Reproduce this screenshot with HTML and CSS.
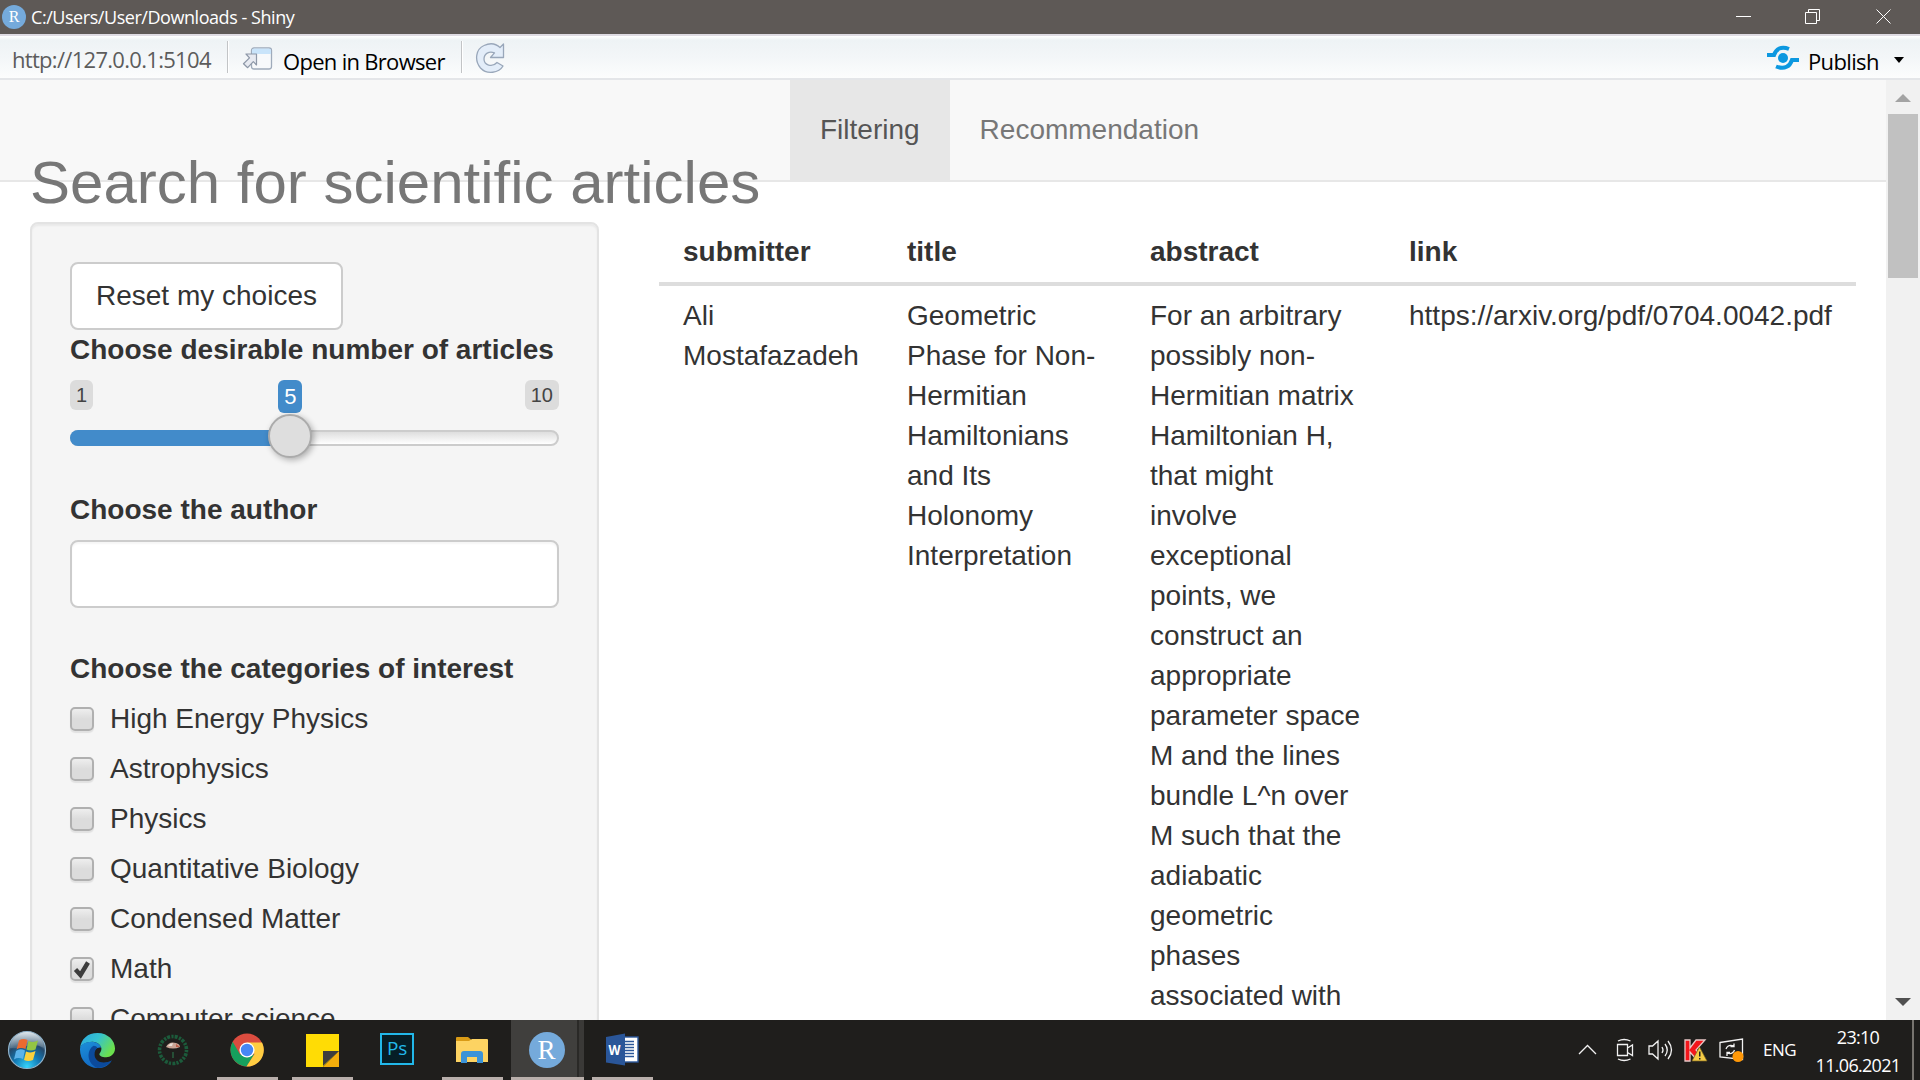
FILE: index.html
```html
<!DOCTYPE html>
<html lang="en">
<head>
<meta charset="utf-8">
<title>C:/Users/User/Downloads - Shiny</title>
<link rel="stylesheet" href="styles.css">
</head>
<body>
<header class="titlebar">
  <span class="r-badge">R</span>
  <span class="caption">C:/Users/User/Downloads - Shiny</span>
  <svg class="window-controls" width="180" height="34" viewBox="0 0 180 34" fill="none" stroke="#fff" stroke-width="1">
    <path d="M16 16.500h15M85.500 12.500h11v11h-11zM88.500 12.500v-3h11v11h-3M156.500 9.500l14 14M170.500 9.500l-14 14"/>
  </svg>
</header>
<div class="toolbar">
  <span class="url">http://127.0.0.1:5104</span>
  <i class="divider"></i>
  <svg class="open-icon" width="32" height="26" viewBox="0 0 32 26">
    <rect x="9.500" y="2" width="20" height="21" rx="2.500" fill="#f7f9fb" stroke="#9fabbb" stroke-width="1.300"/>
    <path d="M10 8V4.500q0-2 2-2h15q2 0 2 2V8z" fill="#c9e4fa"/>
    <path d="M4 8h10.500v11l-3.200-3.300-5.600 6-4.200-4 6-5.800z" fill="#e7eaf1" stroke="#8d97a7" stroke-width="1.200" stroke-linejoin="round"/>
  </svg>
  <span class="open-label">Open in Browser</span>
  <i class="divider"></i>
  <svg class="reload-icon" width="32" height="32" viewBox="0 0 32 32">
    <path d="M28.500 2v13.500H15.500l4-4.600C14 8.500 9 12 9 17c0 6 8 9 13 3.500l6 3.500C24 31 12 33 5.500 26-1 18 1 7 9 3.500c6-2.800 12-1.800 16 2z" fill="#e3edf9" stroke="#99a7ba" stroke-width="1.300" stroke-linejoin="round"/>
  </svg>
  <div class="publish">
    <svg width="32" height="26" viewBox="0 0 32 26">
      <circle cx="16" cy="13" r="5" fill="#0c98e0"/>
      <path d="M0 10h7C9 4 14 .8 22 4M32 15h-7C23 21 18 25 9 21.500" fill="none" stroke="#0c98e0" stroke-width="4"/>
    </svg>
    <span class="publish-label">Publish</span>
    <svg class="caret" width="10" height="6" viewBox="0 0 10 6"><path d="M0 0h10L5 6z"/></svg>
  </div>
</div>
<div class="viewport">
  <div class="page">
    <nav class="navbar">
      <a class="tab active">Filtering</a>
      <a class="tab">Recommendation</a>
    </nav>
    <h2 class="page-title">Search for scientific articles</h2>
    <div class="columns">
      <form class="well">
        <button type="button" class="btn">Reset my choices</button>
        <label class="heading">Choose desirable number of articles</label>
        <div class="slider">
          <div class="slider-labels">
            <span class="limit">1</span><span class="current">5</span><span class="limit last">10</span>
          </div>
          <div class="track"><div class="fill"></div><div class="handle"></div></div>
        </div>
        <label class="heading">Choose the author</label>
        <div class="input"></div>
        <label class="heading">Choose the categories of interest</label>
        <ul class="checks">
          <li><i class="box"></i>High Energy Physics</li>
          <li><i class="box"></i>Astrophysics</li>
          <li><i class="box"></i>Physics</li>
          <li><i class="box"></i>Quantitative Biology</li>
          <li><i class="box"></i>Condensed Matter</li>
          <li><i class="box"><svg width="20" height="20" viewBox="0 0 20 20"><path d="M3.500 10.500l5 5.500L16 3.500" fill="none" stroke="#3c3c3c" stroke-width="4.400"/></svg></i>Math</li>
          <li><i class="box"></i>Computer science</li>
        </ul>
      </form>
      <table class="results">
        <colgroup><col class="c1"><col class="c2"><col class="c3"><col class="c4"></colgroup>
        <thead><tr><th>submitter</th><th>title</th><th>abstract</th><th>link</th></tr></thead>
        <tbody><tr>
          <td>Ali Mostafazadeh</td>
          <td>Geometric Phase for Non-Hermitian Hamiltonians and Its Holonomy Interpretation</td>
          <td>For an arbitrary possibly non-Hermitian matrix Hamiltonian H, that might involve exceptional points, we construct an appropriate parameter space M and the lines bundle L^n over M such that the adiabatic geometric phases associated with</td>
          <td>https://arxiv.org/pdf/0704.0042.pdf</td>
        </tr></tbody>
      </table>
    </div>
  </div>
  <div class="scrollbar">
    <svg width="16" height="8" viewBox="0 0 16 8"><path d="M8 0l8 8H0z" fill="#a3a3a3"/></svg>
    <div class="thumb"></div>
    <svg class="down" width="16" height="8" viewBox="0 0 16 8"><path d="M0 0h16L8 8z" fill="#505050"/></svg>
  </div>
</div>
<footer class="taskbar">
  <div class="task start">
    <svg width="40" height="40" viewBox="0 0 40 40">
      <defs>
        <radialGradient id="orb" cx=".5" cy=".95" r=".9"><stop offset="0" stop-color="#35d4fa"/><stop offset=".4" stop-color="#1278b4"/><stop offset=".7" stop-color="#24496b"/><stop offset="1" stop-color="#9fb4c4"/></radialGradient>
        <linearGradient id="gloss" x2="0" y2="1"><stop offset="0" stop-color="#dde6ec"/><stop offset="1" stop-color="#6f8798" stop-opacity=".5"/></linearGradient>
      </defs>
      <circle cx="20" cy="20" r="18.500" fill="url(#orb)" stroke="#8fb3cb" stroke-width="1.200"/>
      <path d="M3 18a17 16 0 0 1 34 0q-8-5-17-2T3 18z" fill="url(#gloss)"/>
      <path d="M12 10.500q4-2.500 8.500-.5l-2 9q-5-2-9 .5z" fill="#ea6a30"/>
      <path d="M21.500 11q5 2 9.500-.5l-2.500 9q-5 2-9 0z" fill="#93c644"/>
      <path d="M9 21q4-3 9-.5l-2 8.500q-5-2-9 .5z" fill="#5cb3ea"/>
      <path d="M19 21.500q5 2 9.500-.5l-2.500 9q-5 2-9 0z" fill="#fbd03c"/>
    </svg>
  </div>
  <div class="task edge">
    <svg width="37" height="37" viewBox="0 0 38 38">
      <defs>
        <linearGradient id="e1" x1="0" y1="0" x2="1" y2=".5"><stop offset="0" stop-color="#2aa6e0"/><stop offset=".5" stop-color="#35c2cf"/><stop offset="1" stop-color="#6be04d"/></linearGradient>
        <linearGradient id="e2" x1="0" y1="0" x2=".5" y2="1"><stop offset="0" stop-color="#1c8fd8"/><stop offset="1" stop-color="#1267c2"/></linearGradient>
      </defs>
      <path d="M1 17C2 7 9 1 19 1c11 0 18 8 18 16 0 6-5 9-9 9-5 0-7-2-7-3 0-2 2-2 2-6 0-3-4-7-9-7C7 10 2 13 1 17z" fill="url(#e1)"/>
      <path d="M1 18c0-5 5-8 12-8 5 0 9 3 10 6-4-1-8 2-8 7 0 7 7 12 18 7C30 35 25 37 19 37 9 37 1 29 1 18z" fill="url(#e2)"/>
      <path d="M15 14c-6 3-9 17 4 23 7 0 12-4 15-8-10 5-18 1-18-6 0-3 1-5 3-7-1-1-2-2-4-2z" fill="#0b4a9c"/>
    </svg>
  </div>
  <div class="task ring">
    <svg width="34" height="34" viewBox="0 0 34 34">
      <circle cx="17" cy="17" r="13.500" fill="none" stroke="#1c5b3b" stroke-width="3.600" stroke-dasharray="2.200 1.100 3 1.400"/>
      <path d="M10 14q3-6 10-4 4 1 4 4-7 3-14 0z" fill="#c9a596"/><path d="M12 13q2-3 5-3l-1 3z" fill="#e9e0d8"/><path d="M20 11l4 3h-4z" fill="#bd5e48"/>
      <path d="M17 19v6" stroke="#2c7049" stroke-width="1.200"/>
    </svg>
  </div>
  <div class="task chrome open">
    <svg width="34" height="34" viewBox="0 0 34 34">
      <circle cx="17" cy="17" r="16.500" fill="#db4c3f"/>
      <path d="M2.700 8.700A16.500 16.500 0 0 0 16.500 33.500L24.500 21 17 24.500 9.800 21z" fill="#16a05d"/>
      <path d="M16.500 33.500A16.500 16.500 0 0 0 32 9.500H17l7.500 11.500z" fill="#ffcd42"/>
      <circle cx="17" cy="17" r="7.600" fill="#fff"/><circle cx="17" cy="17" r="6.200" fill="#4687f4"/>
    </svg>
  </div>
  <div class="task notes open">
    <svg width="33" height="33" viewBox="0 0 33 33">
      <path d="M0 0h33v17L17 33H0z" fill="#ffdc05"/><path d="M33 17v16H17z" fill="#f5ae0b"/><path d="M17 17h16L17 32z" fill="#3e3e3e"/>
    </svg>
  </div>
  <div class="task ps"><span class="ps-tile">Ps</span></div>
  <div class="task folder open">
    <svg width="34" height="28" viewBox="0 0 34 28">
      <path d="M1 2q0-1 1-1h11l3 2.500V6H1z" fill="#d99b16"/>
      <path d="M1 5h13l3-2h15q1 0 1 1v22H1z" fill="#fdd362"/>
      <path d="M6 27V18q0-3 3-3h16q3 0 3 3v9h-6v-6H12v6z" fill="#3b93d8"/>
    </svg>
  </div>
  <div class="task rstudio open"><span class="r-badge large">R</span></div>
  <div class="task word open">
    <svg width="34" height="34" viewBox="0 0 34 34">
      <rect x="16" y="4" width="17" height="25" fill="#fff" stroke="#2b579a" stroke-width="1.400"/>
      <path d="M19 8.500h10M19 11.500h10M19 14.500h10M19 17.500h10M19 20.500h10M19 23.500h10" stroke="#2b579a" stroke-width="1.500"/>
      <path d="M1 4L20 .500v32L1 29.500z" fill="#2a5699"/>
      <text x="3.500" y="22" font-family="Open Sans, sans-serif" font-size="14" font-weight="700" fill="#fff" textLength="12" lengthAdjust="spacingAndGlyphs">W</text>
    </svg>
  </div>
  <div class="tray">
    <svg width="175" height="60" viewBox="0 0 175 60" fill="none" stroke="#f2f2f2" stroke-width="1.300">
      <path d="M1 34l8.500-8.500L18 34"/>
      <path d="M39.500 24.500h10v11h-10zM49.500 28l5-3v10.500l-5-3M40 21q6-3 12.500 0M40 39q6 3 12.500 0"/>
      <path d="M71 26h3.500l5.500-5v18l-5.500-5H71zM84 27q2 3 0 6M87 24q4.500 6 0 12M90 21q7 9 0 18"/>
      <path d="M107 20h5v8l6-8h9l-9 10 9 10h-8l-7-8v9h-5z" fill="#f3161c" stroke="#e9c8c6"/>
      <path d="M121.500 27l7.500 14h-15z" fill="#f4cb45" stroke="#7d6521" stroke-width=".7"/>
      <path d="M121 31.500h1.500v5H121zM121 38h1.500v1.500H121z" fill="#222" stroke="none"/>
      <path d="M142 22.500l22.500-3.500v20.500L142 37z"/><path d="M148 29q2-5 8-3m0-2.500v3h-3.500M156.500 30q-2 5-7.500 3m0 3v-3.500h3"/>
      <circle cx="160" cy="36.500" r="5.500" fill="#ff9808" stroke="none"/>
    </svg>
    <span class="lang">ENG</span>
    <div class="clock"><span class="time">23:10</span><span class="date">11.06.2021</span></div>
    <i class="peek"></i>
  </div>
</footer>
</body>
</html>
```
FILE: styles.css
```css
* { box-sizing: border-box; }
body {
  margin: 0; width: 1920px; height: 1080px; overflow: hidden;
  display: flex; flex-direction: column;
  font: 28px/40px "Liberation Sans", Arial, sans-serif; color: #333; background: #fff;
}
svg { display: block; flex: none; }

.titlebar {
  height: 36px; flex: none; display: flex; align-items: center;
  background: #5e5956; border-bottom: 2px solid #dedbe2; color: #fff;
  font: 18px/34px "Open Sans", sans-serif;
}
.r-badge {
  width: 24px; height: 24px; margin-left: 2px; border-radius: 50%; flex: none;
  background: #75aadb; color: #fff; text-align: center; font: 16px/24px "Liberation Serif", serif;
}
.r-badge.large { width: 36px; height: 36px; margin: 0 2px 0 0; font-size: 27px; line-height: 36px; }
.caption { margin-left: 5px; letter-spacing: -0.45px; }
.window-controls { margin: 0 20px 0 auto; }

.toolbar {
  height: 44px; flex: none; display: flex; align-items: center; padding: 2px 16px 0 12px;
  background: linear-gradient(#fff 0, #eef3f5 4px, #f3f6f8 50%, #fcfdfd 100%);
  border-bottom: 2px solid #e4e6e9; color: #000;
  font: 22px/36px "Open Sans", sans-serif;
}
.url { color: #5c5c5c; width: 215px; margin-top: 2px; letter-spacing: -0.7px; white-space: nowrap; }
.divider { width: 2px; height: 32px; margin-bottom: 2px; background: linear-gradient(90deg, #c2c4c6 50%, #fff 50%); }
.open-icon { margin: 2px 0 0 13px; }
.open-label { margin: 5px 0 0 9px; width: 178px; letter-spacing: -0.7px; white-space: nowrap; }
.reload-icon { margin-left: 12px; }
.publish { margin-left: auto; display: flex; align-items: center; }
.publish-label { margin: 5px 0 0 9px; width: 86px; letter-spacing: -0.65px; }
.caret { margin-top: 3px; }

.viewport { height: 940px; flex: none; display: flex; overflow: hidden; }
.page { width: 1886px; }
.navbar {
  height: 102px; display: flex; padding-left: 790px;
  background: #f8f8f8; border-bottom: 2px solid #e7e7e7; color: #777;
}
.tab { padding: 30px; height: 100px; line-height: 40px; }
.tab.active { background: #e7e7e7; color: #555; }
.page-title {
  position: relative; margin: -32px 0 6px 30px; font-size: 60px; line-height: 66px; font-weight: 400; color: #777;
}
.columns { display: flex; align-items: flex-start; padding: 0 30px; }
.well {
  width: 569px; height: 900px; padding: 38px; margin-right: 60px; flex: none;
  background: #f5f5f5; border: 2px solid #e3e3e3; border-radius: 8px;
  box-shadow: inset 0 2px 2px rgba(0, 0, 0, .05);
}
.btn {
  display: block; height: 68px; padding: 0 24px; border: 2px solid #ccc; border-radius: 8px;
  background: #fff; color: #333; font: inherit;
}
.heading { display: block; font-weight: 700; margin-bottom: 10px; white-space: nowrap; }
.slider { height: 110px; }
.slider-labels { display: flex; align-items: flex-start; height: 50px; }
.limit {
  height: 30px; padding: 0 6px; border-radius: 6px; background: #dcdcdc;
  color: #444; font-size: 20px; line-height: 30px;
}
.limit.last { margin-left: auto; }
.current {
  height: 33px; padding: 0 6px; margin-left: 185px; border-radius: 6px; background: #428bca;
  color: #fff; font-size: 22px; line-height: 33px;
}
.track {
  position: relative; height: 16px; border: 2px solid #ccc; border-radius: 8px;
  background: linear-gradient(#dedede, #fff);
}
.fill { width: 210px; height: 16px; margin: -2px 0 0 -2px; border-radius: 8px 0 0 8px; background: #428bca; }
.handle {
  position: absolute; left: 196px; top: -18px; width: 44px; height: 44px; border-radius: 50%;
  background: #dedede; border: 2px solid #ababab; box-shadow: 2px 2px 6px rgba(0, 0, 0, .3);
}
.input { height: 68px; margin-bottom: 41px; border: 2px solid #ccc; border-radius: 8px; background: #fff; box-shadow: inset 0 2px 2px rgba(0,0,0,.04); }
.checks { list-style: none; margin: 0; padding: 0; }
.checks li { display: flex; align-items: center; height: 40px; margin-bottom: 10px; white-space: nowrap; }
.box {
  width: 24px; height: 24px; margin-right: 16px; border: 2px solid #b0b0b0; border-radius: 5px;
  background: linear-gradient(#eee, #dcdcdc 50%); box-shadow: 0 2px 1px rgba(0, 0, 0, .08);
}

.results { width: 1197px; table-layout: fixed; border-collapse: collapse; }
.c1 { width: 224px; } .c2 { width: 243px; } .c3 { width: 259px; } .c4 { width: 471px; }
.results th, .results td { padding: 10px 20px 10px 24px; text-align: left; vertical-align: top; }
.results th { border-bottom: 4px solid #ddd; }

.scrollbar { width: 34px; background: #f1f1f1; display: flex; flex-direction: column; align-items: center; padding: 14px 0; }
.thumb { width: 30px; height: 164px; margin-top: 12px; background: #c1c1c1; }
.down { margin-top: auto; }

.taskbar { height: 60px; flex: none; display: flex; background: #1f1e1c; color: #fff; font-family: "Open Sans", sans-serif; }
.task { display: flex; align-items: center; justify-content: center; }
.open { border-bottom: 3px solid #b9afab; padding-top: 3px; }
.start { width: 54px; }
.edge { width: 86px; }
.ring { width: 65px; }
.chrome { width: 61px; margin-left: 12px; padding-right: 2px; }
.notes { width: 61px; margin-left: 14px; padding-right: 1px; }
.ps { width: 62px; margin: 0 14px 3px 13px; }
.ps-tile {
  width: 34px; height: 32px; border: 2px solid #22b8ea; background: #061e26; color: #22b8ea;
  font-size: 19px; line-height: 27px; text-align: center; letter-spacing: -0.3px;
}
.folder { width: 61px; padding-right: 2px; }
.rstudio { width: 73px; margin-left: 8px; background: linear-gradient(90deg, #403f3d 66px, #2a2927 66px, #2a2927 68px, #3a3937 68px); }
.word { width: 61px; margin-left: 8px; padding-right: 2px; }
.tray { margin-left: auto; display: flex; align-items: center; }
.lang { margin-left: 10px; width: 45px; font-size: 17px; letter-spacing: -0.5px; }
.clock { width: 100px; margin-right: 6px; padding-top: 1px; display: flex; flex-direction: column; align-items: center; font-size: 18px; line-height: 28px; letter-spacing: -0.7px; }
.peek { width: 2px; height: 60px; margin: 0 6px 0 -2px; background: #77746f; }
```
